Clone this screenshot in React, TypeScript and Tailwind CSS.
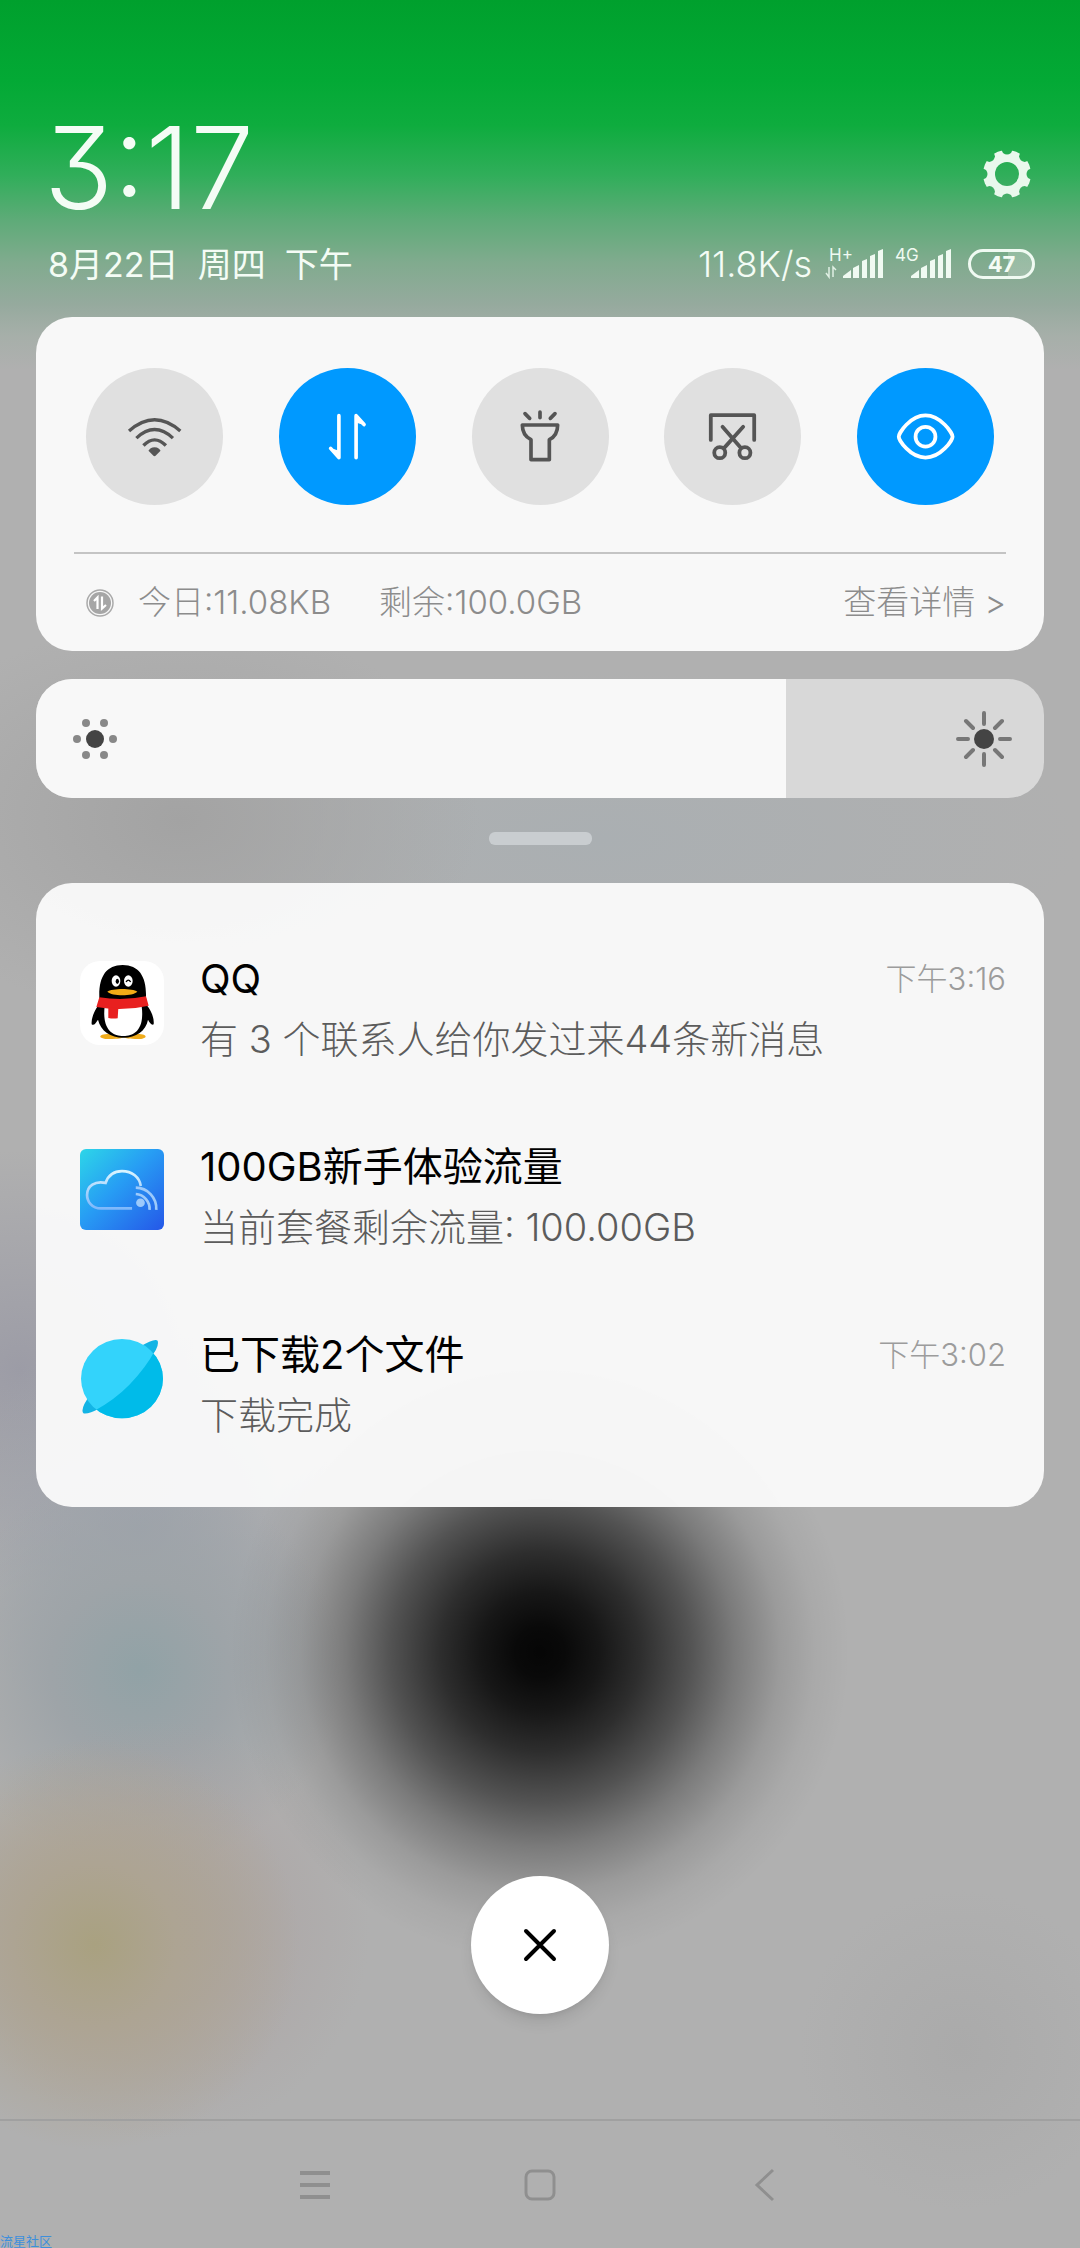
import { useState } from "react";
import type { ReactNode } from "react";

function Backdrop() {
  return (
    <div className="absolute inset-0 overflow-hidden bg-[#b0b0b0]" aria-hidden="true">
      <div className="absolute inset-x-0 top-[620px] h-[380px] bg-[radial-gradient(ellipse_300px_200px_at_180px_200px,#a3a3a3,transparent),radial-gradient(ellipse_480px_170px_at_600px_220px,#aaafb2,transparent)]" />
      <div className="absolute inset-x-0 top-0 h-[370px] bg-[linear-gradient(to_bottom,#00a02d_0px,#03a935_80px,#0eac3e_125px,#30ae5a_175px,#5eab78_220px,#80ab8e_262px,#96aa9e_305px,#a6afa9_335px,transparent_370px)]" />
      <div className="absolute left-[-200px] top-[1150px] size-[440px] bg-[radial-gradient(closest-side,#9c9ca6,transparent)]" />
      <div className="absolute left-[-60px] top-[1330px] size-[400px] bg-[radial-gradient(closest-side,#9da2ab,transparent)]" />
      <div className="absolute left-[-60px] top-[1470px] size-[400px] bg-[radial-gradient(closest-side,#91a2a6,#9ea4a8_45%,transparent)]" />
      <div className="absolute left-[-50px] top-[1720px] size-[420px] bg-[radial-gradient(closest-side,#aba1a0,transparent)]" />
      <div className="absolute left-[-110px] top-[1740px] size-[410px] bg-[radial-gradient(closest-side,#a9a180,#ada493_40%,transparent)]" />
      <div className="absolute left-[800px] top-[1890px] size-[320px] bg-[radial-gradient(closest-side,#aaa,transparent)]" />
      <div className="absolute left-1/2 top-[1302px] size-[700px] -translate-x-1/2 bg-[radial-gradient(circle,rgba(0,0,0,.97)_0px,rgba(0,0,0,.95)_25px,rgba(0,0,0,.87)_60px,rgba(0,0,0,.74)_100px,rgba(0,0,0,.53)_150px,rgba(0,0,0,.3)_195px,rgba(0,0,0,.12)_240px,rgba(0,0,0,.04)_275px,transparent_310px)]" />
    </div>
  );
}

function GearIcon() {
  return (
    <svg viewBox="0 0 48 48" className="size-12">
      <mask id="gear">
        <circle cx="24" cy="24" r="24" fill="white" />
        <circle cx="24" cy="24" r="12" fill="black" />
        {[0, 45, 90, 135, 180, 225, 270, 315].map((deg) => (
          <path key={deg} d="M18 -1L20 3Q24 6 28 3L30 -1Z" fill="black" transform={`rotate(${deg} 24 24)`} />
        ))}
      </mask>
      <rect width="48" height="48" fill="#e9f8ec" mask="url(#gear)" />
    </svg>
  );
}

function SignalBars({ x }: { x: number }) {
  return (
    <g transform={`translate(${x} 0)`} fill="#f0faf2">
      <path d="M0 30V28L8 22V30Z" />
      <path d="M10 30V20L16 17V30Z" />
      <path d="M19 30V13L24 11V30Z" />
      <path d="M27 30V8L32 6V30Z" />
      <path d="M35 30V3L40 1V30Z" />
    </g>
  );
}

function WifiIcon() {
  return (
    <svg viewBox="288 315 170 130" className="w-[57px]" fill="none" stroke="#555" strokeWidth="10">
      <path d="M297 363Q373 296 450 363M319 384Q373 333 428 384M340 406Q373 372 407 406" />
      <path d="M373 411C383 411 390 417 391 422L377 436Q373 440 369 436L355 422C358 416 364 411 373 411Z" fill="#555" stroke="none" />
    </svg>
  );
}

function DataIcon() {
  return (
    <svg viewBox="885 302 130 156" className="w-[43px]" fill="none" stroke="white" strokeWidth="11" strokeLinecap="round" strokeLinejoin="round">
      <path d="M924 316V443L899 415M976 443V316L1000 343" />
      <path d="M924 443L905 418L924 424ZM976 316L995 341L976 335Z" fill="white" strokeWidth="4" />
    </svg>
  );
}

function TorchIcon() {
  return (
    <svg viewBox="1453 296 150 166" className="w-[50px]" fill="none" stroke="#555" strokeWidth="11" strokeLinecap="round" strokeLinejoin="round">
      <path d="M1475 344H1581C1581 366 1572 380 1556 388V448H1501V388C1485 380 1475 366 1475 344ZM1483 310L1497 324M1528 305V322M1573 310L1559 324" />
    </svg>
  );
}

function ScreenshotIcon() {
  return (
    <svg viewBox="485 308 148 146" className="w-[51px]" fill="none" stroke="#555" strokeWidth="11" strokeLinecap="round" strokeLinejoin="round">
      <path d="M496 392V320H622V392M530 354L583 415M590 354L535 415" />
      <circle cx="522" cy="429" r="16" />
      <circle cx="595" cy="429" r="16" />
    </svg>
  );
}

function EyeIcon() {
  return (
    <svg viewBox="1030 305 178 150" className="w-[61px]" fill="none" stroke="white" strokeWidth="11">
      <path d="M1041 380C1041 370 1074 318 1119 318S1198 370 1198 380S1164 441 1119 441S1041 390 1041 380Z" strokeLinejoin="round" />
      <circle cx="1119" cy="380" r="29" />
    </svg>
  );
}

function UsageIcon() {
  return (
    <svg viewBox="0 0 28 28" className="size-7" fill="none">
      <circle cx="14" cy="14" r="13" stroke="#aaa" strokeWidth="1.5" />
      <circle cx="14" cy="14" r="11" fill="#a6a6a6" />
      <path d="M8 12L11.5 8.5V20M16 7.5V19.5L20 16" stroke="white" strokeWidth="2.2" />
    </svg>
  );
}

function DimIcon() {
  return (
    <svg viewBox="0 0 44 40" className="w-11">
      <circle cx="22" cy="20" r="9" fill="#444" />
      <g fill="#888">
        <circle cx="4" cy="20" r="4" />
        <circle cx="40" cy="20" r="4" />
        <circle cx="13" cy="4" r="4" />
        <circle cx="31" cy="4" r="4" />
        <circle cx="13" cy="36" r="4" />
        <circle cx="31" cy="36" r="4" />
      </g>
    </svg>
  );
}

function BrightIcon() {
  return (
    <svg viewBox="0 0 56 56" className="size-14" stroke="#777" strokeWidth="4" strokeLinecap="round">
      <circle cx="28" cy="28" r="10" fill="#444" stroke="none" />
      <path d="M28 2V13M28 43V54M2 28H12M44 28H54M10 10L17 17M39 39L46 46M46 10L39 17M17 39L10 46" />
    </svg>
  );
}

function PenguinIcon() {
  return (
    <svg viewBox="32 36 252 252" className="size-[84px] rounded-[20px] bg-white">
      <path d="M120 254C80 256 88 270 120 270C150 270 158 268 162 264C168 268 180 270 206 270C234 270 240 256 204 254Z" fill="#f0ac1c" />
      <path d="M90 145C88 84 110 48 160 48S232 84 230 145L232 168C246 184 255 208 253 226C247 230 240 220 236 212C230 246 200 266 162 266S94 246 86 212C80 220 74 232 67 226C65 208 76 182 88 168Z" fill="#000" />
      <path d="M106 172C98 240 128 261 162 261S226 240 217 172Z" fill="#fff" />
      <path d="M90 145Q160 157 230 142L238 170Q160 188 81 174Z" fill="#e8201f" />
      <path d="M117 174L147 178L145 208Q130 210 117 207Z" fill="#e8201f" />
      <ellipse cx="140" cy="96" rx="13" ry="17" fill="#fff" />
      <ellipse cx="177" cy="96" rx="13" ry="17" fill="#fff" />
      <ellipse cx="144" cy="97" rx="5" ry="8" fill="#000" />
      <path d="M170 99Q177 88 184 99" fill="none" stroke="#000" strokeWidth="4" />
      <path d="M114 128C128 117 190 117 204 128C190 142 128 142 114 128Z" fill="#f3ab17" />
    </svg>
  );
}

function CloudIcon() {
  return (
    <svg viewBox="153 668 250 242" className="w-[84px] rounded-md" fill="none" strokeWidth="8">
      <defs>
        <linearGradient id="sky" x1="0" y1="0" x2="1" y2="1">
          <stop offset="0" stopColor="#2dd6e8" />
          <stop offset=".45" stopColor="#279df4" />
          <stop offset="1" stopColor="#2557e8" />
        </linearGradient>
        <linearGradient id="cloud" x1="0" y1="0" x2="0" y2="1">
          <stop offset="0" stopColor="#d9f4ff" />
          <stop offset="1" stopColor="#7fb8fb" />
        </linearGradient>
      </defs>
      <rect x="153" y="668" width="250" height="242" fill="url(#sky)" />
      <path d="M308 845H215C188 845 174 824 174 805C174 778 198 762 229 769C238 744 258 734 278 734C308 734 330 752 334 778" stroke="url(#cloud)" />
      <circle cx="333" cy="828" r="13" fill="#9ccafb" />
      <path d="M319 802A44 44 0 0 1 360 849M319 783A62 62 0 0 1 380 849" stroke="#9ccafb" />
    </svg>
  );
}

function PlanetIcon() {
  return (
    <svg viewBox="153 1210 250 246" className="w-[84px]">
      <clipPath id="globe">
        <ellipse cx="278" cy="1334" rx="122" ry="118" />
      </clipPath>
      <path d="M330 1240Q375 1213 384 1221Q390 1238 362 1272ZM185 1380Q152 1425 163 1437Q176 1441 212 1422Z" fill="#13b4e5" />
      <g clipPath="url(#globe)">
        <rect x="153" y="1210" width="250" height="246" fill="#33d3fb" />
        <path d="M376 1250Q350 1300 300 1352Q255 1398 195 1430V1460H410V1250Z" fill="#00bbe9" />
      </g>
    </svg>
  );
}

const toggles: { label: string; on: boolean; icon: ReactNode }[] = [
  { label: "WLAN", on: false, icon: <WifiIcon /> },
  { label: "移动数据", on: true, icon: <DataIcon /> },
  { label: "手电筒", on: false, icon: <TorchIcon /> },
  { label: "截屏", on: false, icon: <ScreenshotIcon /> },
  { label: "护眼模式", on: true, icon: <EyeIcon /> },
];

const notifications = [
  { title: "QQ", text: "有 3 个联系人给你发过来44条新消息", time: "下午3:16", icon: <PenguinIcon /> },
  { title: "100GB新手体验流量", text: "当前套餐剩余流量: 100.00GB", time: "", icon: <CloudIcon /> },
  { title: "已下载2个文件", text: "下载完成", time: "下午3:02", icon: <PlanetIcon /> },
];

function Header() {
  return (
    <header className="pl-2 pr-[9px] pt-[108px] text-[#f4fcf5]">
      <div className="flex items-center justify-between pr-1">
        <time className="text-[114px] font-light leading-[120px] [font-feature-settings:'cv09']">3:17</time>
        <button type="button" aria-label="设置" className="mt-3">
          <GearIcon />
        </button>
      </div>
      <div className="mt-3 flex h-12 items-center justify-between pl-1">
        <p className="whitespace-pre text-[34px]">8月22日  周四  下午</p>
        <div className="flex items-center">
          <span className="text-[36px] font-light">11.8K/s</span>
          <svg viewBox="0 -4 128 40" className="ml-3 h-10 w-32" fontSize="17" fill="#f0faf2">
            <text x="5" y="13">H+</text>
            <path d="M5 19V29L2 25M9 29V19L12 22" fill="none" stroke="#e0f0e4" strokeWidth="1.5" />
            <SignalBars x={19} />
            <text x="71" y="13">4G</text>
            <SignalBars x={87} />
          </svg>
          <span className="ml-4 flex h-[30px] w-[67px] items-center justify-center rounded-full border-[3px] border-[#f0faf2] bg-linear-to-r from-transparent from-60% to-white/20 to-60% text-[22px] font-bold leading-none">
            47
          </span>
        </div>
      </div>
    </header>
  );
}

function QuickPanel() {
  return (
    <section className="rounded-[36px] bg-[#f8f8f8] px-[38px] pt-[51px]">
      <div className="flex justify-between px-3">
        {toggles.map((item) => (
          <button
            key={item.label}
            type="button"
            aria-label={item.label}
            aria-pressed={item.on}
            className={`flex size-[137px] items-center justify-center rounded-full ${item.on ? "bg-[#0099ff]" : "bg-[#e0e0e0]"}`}
          >
            {item.icon}
          </button>
        ))}
      </div>
      <div className="mt-[47px] flex h-[99px] items-center border-t-2 border-[#c4c4c4] pl-3 text-[33px] font-light text-[#8c8c8c]">
        <UsageIcon />
        <span className="ml-6">今日:11.08KB</span>
        <span className="ml-12">剩余:100.0GB</span>
        <a href="#usage" className="ml-auto">查看详情 &gt;</a>
      </div>
    </section>
  );
}

function BrightnessBar() {
  const [level, setLevel] = useState(744);
  return (
    <label className="relative mt-7 flex h-[119px] items-center justify-between overflow-hidden rounded-[36px] bg-[#d8d8d8] pl-[37px] pr-8">
      <span className="absolute inset-y-0 left-0 bg-[#f8f8f8]" style={{ width: `${level / 10}%` }} />
      <span className="relative">
        <DimIcon />
      </span>
      <span className="relative">
        <BrightIcon />
      </span>
      <input
        type="range"
        min={0}
        max={1000}
        value={level}
        aria-label="亮度"
        onChange={(e) => setLevel(Number(e.target.value))}
        className="absolute inset-0 h-full w-full cursor-pointer opacity-0"
      />
    </label>
  );
}

function NotificationList() {
  return (
    <ul className="flex flex-col gap-[68px] rounded-[36px] bg-[#f8f8f8]/98 px-[38px] pb-[62px] pt-[66px]">
      {notifications.map((item) => (
        <li key={item.title} className="flex h-[120px] items-start gap-9 pl-[6px]">
          <div className="pt-3">{item.icon}</div>
          <div className="min-w-0 flex-1">
            <div className="flex items-center justify-between">
              <h2 className="text-[40px] leading-[60px] text-black">{item.title}</h2>
              {item.time && <time className="text-[31px] font-light text-[#9c9c9c]">{item.time}</time>}
            </div>
            <p className="text-[38px] font-light leading-[60px] text-[#5c5c5c]">{item.text}</p>
          </div>
        </li>
      ))}
    </ul>
  );
}

function NavBar() {
  return (
    <nav className="flex h-[129px] items-center justify-center gap-[181px] border-t-2 border-[#a0a0a0]">
      <button type="button" aria-label="最近任务">
        <svg viewBox="0 0 44 44" className="size-11" stroke="#8f8f8f" strokeWidth="4">
          <path d="M7 10H37M7 22H37M7 34H37" />
        </svg>
      </button>
      <button type="button" aria-label="主屏幕">
        <svg viewBox="0 0 44 44" className="size-11" fill="none" stroke="#8f8f8f" strokeWidth="3">
          <rect x="8" y="8" width="28" height="28" rx="6" />
        </svg>
      </button>
      <button type="button" aria-label="返回">
        <svg viewBox="0 0 44 44" className="size-11" fill="none" stroke="#8f8f8f" strokeWidth="3">
          <path d="M30 7L14 22L30 37" />
        </svg>
      </button>
    </nav>
  );
}

export default function App() {
  return (
    <div className="relative isolate flex min-h-screen flex-col font-[Inter,'Noto_Sans_CJK_SC',sans-serif]">
      <Backdrop />
      <main className="relative flex flex-1 flex-col px-9">
        <Header />
        <div className="mt-[29px]">
          <QuickPanel />
          <BrightnessBar />
        </div>
        <div className="mx-auto mb-[38px] mt-[34px] h-[13px] w-[103px] rounded-md bg-[#c9cdd0]" />
        <NotificationList />
        <button
          type="button"
          aria-label="清除全部通知"
          className="mx-auto mb-[105px] mt-auto flex size-[138px] items-center justify-center rounded-full bg-white shadow-lg"
        >
          <svg viewBox="0 0 40 40" className="size-10" stroke="black" strokeWidth="4" strokeLinecap="round">
            <path d="M6 6L34 34M34 6L6 34" />
          </svg>
        </button>
      </main>
      <div className="relative">
        <NavBar />
        <span className="absolute bottom-0 left-0 text-[13px] leading-none text-[#3d8fdc]">流星社区</span>
      </div>
    </div>
  );
}
